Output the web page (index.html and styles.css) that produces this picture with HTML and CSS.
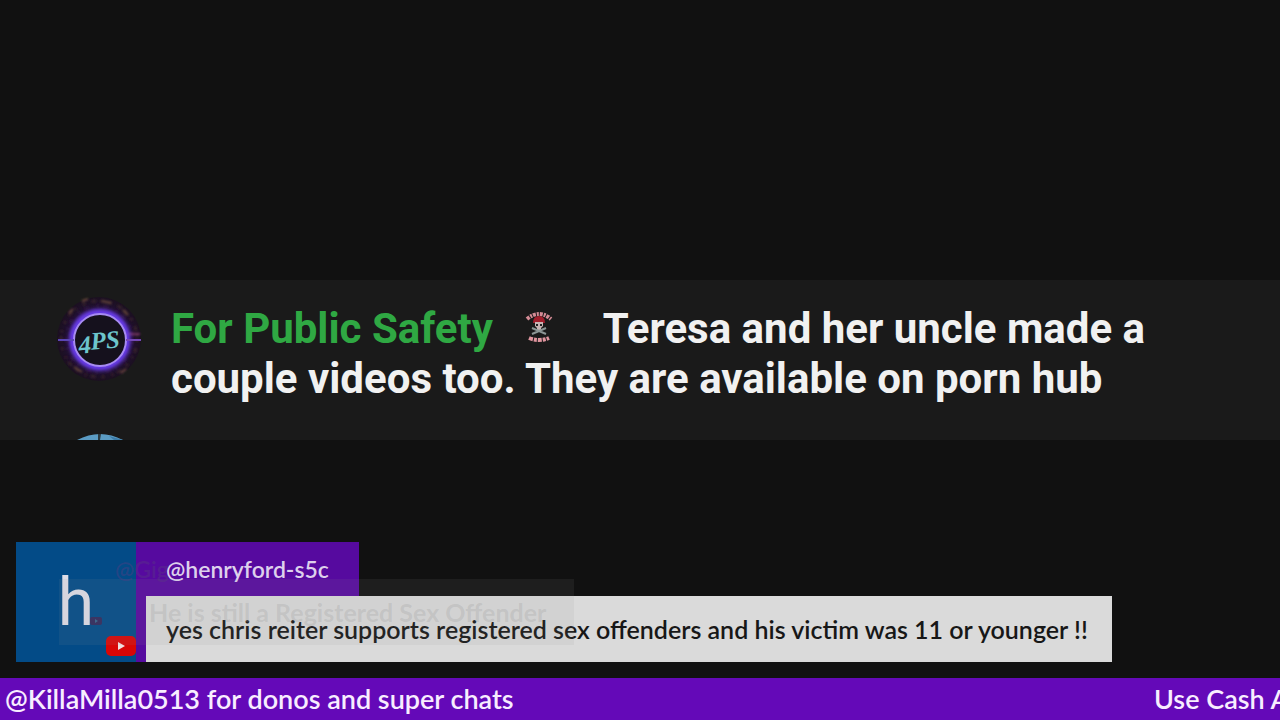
FILE: index.html
```html
<!DOCTYPE html>
<html lang="en">
<head>
    <meta charset="UTF-8">
    <meta name="viewport" content="width=device-width, initial-scale=1.0">
    <title>Live Stream</title>
    <link rel="stylesheet" href="styles.css">
</head>
<body>

    <!-- Live chat -->
    <main class="chat">
        <div class="chat-message">
            <svg class="chat-avatar" viewBox="0 0 86 86" aria-hidden="true">
                <defs>
                    <radialGradient id="halo">
                        <stop offset="0.5" stop-color="#15101f"/>
                        <stop offset="0.64" stop-color="#432183"/>
                        <stop offset="0.76" stop-color="#211031"/>
                        <stop offset="1" stop-color="#1b1020"/>
                    </radialGradient>
                    <filter id="glow" x="-30%" y="-30%" width="160%" height="160%">
                        <feGaussianBlur stdDeviation="2"/>
                    </filter>
                    <filter id="soft">
                        <feGaussianBlur stdDeviation="1"/>
                    </filter>
                </defs>
                <circle cx="42" cy="43" r="42" fill="url(#halo)"/>
                <g filter="url(#soft)">
                    <circle cx="42" cy="43" r="38" fill="none" stroke="#35202c" stroke-width="3" stroke-dasharray="3 6 5 4 2 7"/>
                    <circle cx="42" cy="43" r="33" fill="none" stroke="#2d153e" stroke-width="3" stroke-dasharray="5 8 2 5"/>
                    <path d="M12 17l4-4M25 5l6-2M45 5l9 2M66 14l5 5M17 71l8 5M64 77l5-4" stroke="#65453a" stroke-width="2"/>
                    <path d="M63 38h20" stroke="#713060" stroke-width="2"/>
                </g>
                <circle cx="43" cy="44" r="27" fill="none" stroke="#6a3df0" stroke-width="7" filter="url(#glow)"/>
                <circle cx="43" cy="44" r="26" fill="#15111d" stroke="#a78bf2" stroke-width="2"/>
                <rect x="1" y="43" width="16" height="2" fill="#5b45b5"/>
                <rect x="69" y="43" width="15" height="2" fill="#7548b8"/>
                <text class="avatar-text" x="21" y="53" transform="rotate(-5 43 44)"><tspan dy="3">4</tspan><tspan dy="-3">PS</tspan></text>
            </svg>
            <p class="chat-text">
                <span class="chat-author">For Public Safety</span>
                <svg class="chat-badge" viewBox="0 0 28 32" aria-hidden="true">
                    <path d="M2 8Q14-2 26 8" fill="none" stroke="#d58c96" stroke-width="4" stroke-dasharray="3 1 2 1"/>
                    <path d="M8 12q0-7 6-7t6 7z" fill="#a11d2b"/>
                    <path d="M10 11h8v4l-2 2v2h-4v-2l-2-2z" fill="#c8b4b4"/>
                    <path d="M11 13h2v2h-2zM15 13h2v2h-2z" fill="#222"/>
                    <path d="M7 17l14 6M21 17L7 23" stroke="#8c9695" stroke-width="2"/>
                    <path d="M4 27q10 4 20 0" fill="none" stroke="#e0959f" stroke-width="4" stroke-dasharray="4 1 3 1"/>
                </svg>
                Teresa and her uncle made a couple videos too. They are available on porn hub
            </p>
        </div>
        <svg class="next-avatar" viewBox="0 0 86 6" aria-hidden="true">
            <path d="M20 6Q43-6 66 6z" fill="#5b9cc4"/>
            <path d="M41 0h3l-1 6h-2z" fill="#2c3a40"/>
            <path d="M52 2l14 4h-9z" fill="#3b7caa"/>
        </svg>
    </main>

    <!-- Featured comment -->
    <section class="featured">
        <div class="avatar">
            <span class="avatar-letter">h</span>
            <svg class="youtube" viewBox="0 0 30 20" aria-hidden="true">
                <rect width="30" height="20" rx="5" fill="#d90606"/>
                <path d="M12 6l7 4-7 4z" fill="#f0e0e0"/>
            </svg>
        </div>
        <div class="comment">
            <div class="comment-name">@henryford-s5c</div>
            <p class="comment-text">yes chris reiter supports registered sex offenders and his victim was 11 or younger !!</p>
        </div>

        <!-- Previous comment fading out -->
        <div class="fading">
            <div class="fading-name">@Gig</div>
            <p class="fading-text">He is still a Registered Sex Offender</p>
            <svg class="fading-icon" viewBox="0 0 12 8" aria-hidden="true">
                <rect width="12" height="8" rx="2" fill="#3b3562"/>
                <path d="M5 2l3 2-3 2z" fill="#40698c"/>
            </svg>
        </div>
    </section>

    <!-- Ticker -->
    <footer class="ticker">
        <span>@KillaMilla0513 for donos and super chats</span>
        <span class="ticker-next">Use Cash App</span>
    </footer>

</body>
</html>
```
FILE: styles.css
```css
* {
    box-sizing: border-box;
}

body {
    display: flex;
    flex-direction: column;
    justify-content: flex-end;
    min-height: 100vh;
    margin: 0;
    background-color: #111111;
    overflow: hidden;
    font-family: Lato, "Liberation Sans", sans-serif;
}

p {
    margin: 0;
}

/* Live chat */
.chat {
    display: flex;
    flex-direction: column;
    justify-content: space-between;
    min-height: 160px;
    margin-bottom: 102px;
    padding: 16px 57px 0;
    background-color: #1a1a1a;
}

.chat-message {
    display: flex;
    gap: 28px;
}

.chat-avatar {
    flex: none;
    width: 86px;
    height: 86px;
}

.avatar-text {
    font: italic bold 25px "Liberation Serif", serif;
    fill: #6dc5cc;
}

.chat-text {
    padding-top: 8px;
    color: #f1f1f1;
    font-family: Roboto, "Liberation Sans", sans-serif;
    font-size: 42px;
    font-weight: 700;
    line-height: 50px;
}

.chat-author {
    color: #2fa843;
}

.chat-badge {
    width: 28px;
    height: 32px;
    margin: 0 40px 0 22px;
}

.next-avatar {
    width: 86px;
    height: 6px;
}

/* Featured comment */
.featured {
    position: relative;
    display: flex;
    margin: 0 16px 16px;
}

.avatar {
    position: relative;
    display: flex;
    flex: none;
    justify-content: center;
    align-items: center;
    width: 120px;
    height: 120px;
    background-color: #034b87;
}

.avatar-letter {
    color: #dedde7;
    font-family: Roboto, sans-serif;
    font-size: 66px;
}

.youtube {
    position: absolute;
    right: 0;
    bottom: 6px;
    width: 30px;
    height: 20px;
}

.comment {
    display: flex;
    flex-direction: column;
    align-items: flex-start;
    background: linear-gradient(#560a9f, #560a9f) left / 10px 100% no-repeat;
}

.comment-name {
    height: 54px;
    padding: 0 30px;
    background-color: #560a9f;
    color: #ddd0ec;
    font-size: 23px;
    font-weight: 600;
    line-height: 54px;
}

.comment-text {
    margin-left: 10px;
    padding: 0 24px 0 20px;
    background-color: #dadada;
    color: #171717;
    font-size: 25px;
    font-weight: 600;
    line-height: 66px;
}

/* Previous comment */
.fading {
    position: absolute;
    top: 37px;
    left: 43px;
    padding: 0 28px 0 90px;
    background-color: rgba(150, 150, 150, 0.1);
}

.fading-name {
    position: absolute;
    top: -24px;
    left: 56px;
    color: rgba(90, 60, 130, 0.4);
    font-size: 23px;
    font-weight: 600;
}

.fading-text {
    color: rgba(150, 150, 150, 0.24);
    font-size: 25px;
    font-weight: 700;
    line-height: 66px;
}

.fading-icon {
    position: absolute;
    top: 38px;
    left: 31px;
    width: 12px;
    height: 8px;
}

/* Ticker */
.ticker {
    display: flex;
    justify-content: space-between;
    padding-left: 5px;
    background-color: #6409b8;
    color: #f8edff;
    font-size: 27px;
    font-weight: 600;
    line-height: 42px;
    white-space: nowrap;
}

.ticker-next {
    width: 126px;
    overflow: hidden;
}
```
